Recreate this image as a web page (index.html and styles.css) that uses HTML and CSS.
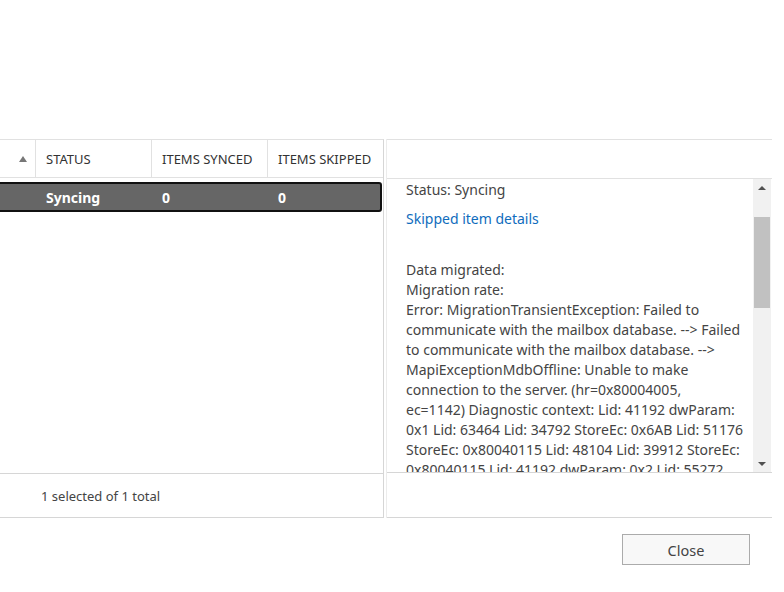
FILE: index.html
```html
<!DOCTYPE html>
<html lang="en">
<head>
    <meta charset="UTF-8">
    <title>Migration batch details</title>
    <link rel="stylesheet" href="styles.css">
</head>
<body>
    <div class="dialog">
        <div class="panes">
            <div class="list-pane">
                <div class="grid-head">
                    <div class="col col-sort"><span class="sort-up"></span></div>
                    <div class="col">STATUS</div>
                    <div class="col">ITEMS SYNCED</div>
                    <div class="col col-last">ITEMS SKIPPED</div>
                </div>
                <div class="grid-body">
                    <div class="grid-row selected">
                        <div class="cell"></div>
                        <div class="cell">Syncing</div>
                        <div class="cell">0</div>
                        <div class="cell">0</div>
                    </div>
                </div>
                <div class="list-footer">1 selected of 1 total</div>
            </div>

            <div class="detail-pane">
                <div class="detail-head"></div>
                <div class="detail-body">
                    <div class="detail-text">
                        <p>Status: Syncing</p>
                        <p class="link-line"><a href="#">Skipped item details</a></p>
                        <p class="data-block">Data migrated:<br>
                        Migration rate:<br>
                        Error: MigrationTransientException: Failed to<br>
                        communicate with the mailbox database. --&gt; Failed<br>
                        to communicate with the mailbox database. --&gt;<br>
                        MapiExceptionMdbOffline: Unable to make<br>
                        connection to the server. (hr=0x80004005,<br>
                        ec=1142) Diagnostic context: Lid: 41192 dwParam:<br>
                        0x1 Lid: 63464 Lid: 34792 StoreEc: 0x6AB Lid: 51176<br>
                        StoreEc: 0x80040115 Lid: 48104 Lid: 39912 StoreEc:<br>
                        0x80040115 Lid: 41192 dwParam: 0x2 Lid: 55272</p>
                    </div>
                    <div class="scrollbar">
                        <div class="arrow arrow-up"></div>
                        <div class="track">
                            <div class="thumb"></div>
                        </div>
                        <div class="arrow arrow-down"></div>
                    </div>
                </div>
                <div class="detail-footer"></div>
            </div>
        </div>

        <div class="actions">
            <button class="btn">Close</button>
        </div>
    </div>
</body>
</html>
```

FILE: styles.css
```css
* {
    margin: 0;
    padding: 0;
    box-sizing: border-box;
}

body {
    font-family: 'Noto Sans', 'Open Sans', sans-serif;
    color: #444;
    background: #fff;
    overflow: hidden;
}

.dialog {
    padding-top: 139px;
}

.panes {
    display: flex;
    margin-left: -10px;
}

/* left: the grid */
.list-pane {
    width: 394px;
    border-top: 1px solid #e1e1e1;
    border-right: 1px solid #d6d6d6;
}

.grid-head {
    display: grid;
    grid-template-columns: 46px 116px 116px 1fr;
    height: 38px;
    border-bottom: 1px solid #e1e1e1;
}

.col {
    display: flex;
    align-items: center;
    padding-left: 10px;
    font-size: 13px;
    color: #333;
    border-right: 1px solid #e1e1e1;
}

.col-sort {
    justify-content: flex-end;
    padding-right: 8px;
}

.col-last {
    border-right: none;
}

.sort-up {
    width: 0;
    height: 0;
    border-left: 4px solid transparent;
    border-right: 4px solid transparent;
    border-bottom: 6px solid #777;
}

.grid-body {
    height: 296px;
    padding-top: 4px;
    border-bottom: 1px solid #d6d6d6;
}

.grid-row {
    display: grid;
    grid-template-columns: 44px 116px 116px 1fr;
    height: 30px;
    margin-right: 1px;
}

.grid-row.selected {
    background: #666;
    border: 2px solid #111;
    border-radius: 3px;
    color: #fff;
    font-weight: bold;
}

.cell {
    display: flex;
    align-items: center;
    padding-left: 10px;
    font-size: 14px;
}

.list-footer {
    height: 44px;
    display: flex;
    align-items: center;
    padding-left: 51px;
    font-size: 13px;
    color: #444;
    border-bottom: 1px solid #d6d6d6;
}

/* right: the details */
.detail-pane {
    width: 386px;
    margin-left: 2px;
    border-left: 1px solid #ececec;
}

.detail-head {
    height: 40px;
    border-top: 1px solid #e1e1e1;
    border-bottom: 1px solid #e1e1e1;
}

.detail-body {
    display: flex;
    height: 294px;
    border-bottom: 1px solid #d6d6d6;
}

.detail-text {
    flex: 1;
    overflow: hidden;
    padding: 1px 2px 0 19px;
    font-size: 14px;
    line-height: 20px;
}

.link-line {
    margin-top: 9px;
}

.link-line a {
    color: #0f6cbd;
    text-decoration: none;
}

.data-block {
    margin-top: 31px;
    white-space: nowrap;
}

.scrollbar {
    width: 18px;
    margin-right: 1px;
    background: #f1f1f1;
    display: flex;
    flex-direction: column;
}

.arrow {
    height: 17px;
    display: flex;
    align-items: center;
    justify-content: center;
}

.arrow::after {
    content: "";
    width: 0;
    height: 0;
    border-left: 4px solid transparent;
    border-right: 4px solid transparent;
}

.arrow-up::after {
    border-bottom: 4px solid #505050;
}

.arrow-down::after {
    border-top: 4px solid #505050;
}

.track {
    flex: 1;
    padding: 21px 1px 0 1px;
}

.thumb {
    height: 91px;
    background: #c1c1c1;
}

.detail-footer {
    height: 45px;
    border-bottom: 1px solid #d6d6d6;
}

.actions {
    display: flex;
    justify-content: flex-end;
    padding: 16px 34px 0 0;
}

.btn {
    width: 128px;
    height: 31px;
    font-family: 'Noto Sans', 'Open Sans', sans-serif;
    font-size: 14.5px;
    color: #444;
    background: #f8f8f8;
    border: 1px solid #ababab;
}
```
